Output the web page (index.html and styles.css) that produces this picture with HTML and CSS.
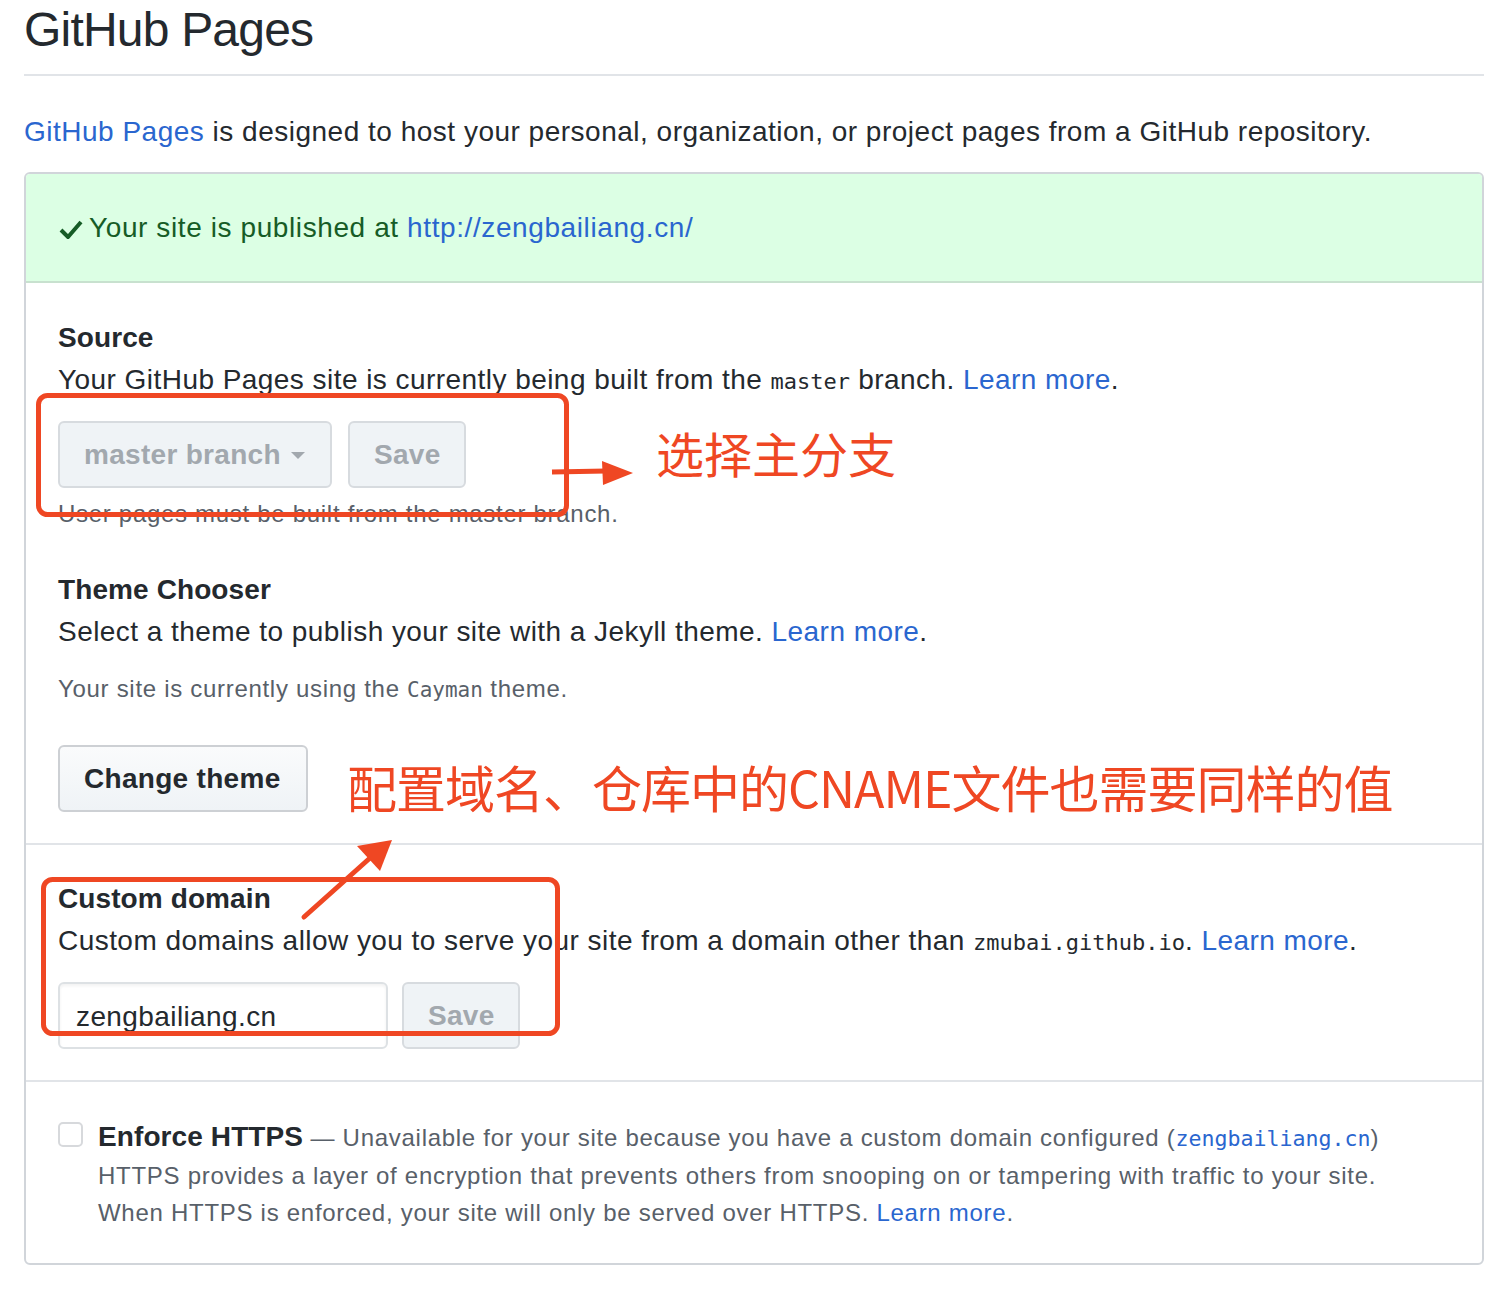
FILE: index.html
```html
<!DOCTYPE html>
<html lang="en">
<head>
<meta charset="utf-8">
<title>GitHub Pages</title>
<link rel="stylesheet" href="styles.css">
</head>
<body>
<div class="page">
  <div class="subhead">
    <h2 class="subhead-title">GitHub Pages</h2>
  </div>
  <p class="intro"><a class="link" href="#">GitHub Pages</a> is designed to host your personal, organization, or project pages from a GitHub repository.</p>

  <div class="box">
    <div class="flash">
      <svg class="check" width="24" height="20" viewBox="0 0 24 20"><path d="M2 11 L9 18 L22 3" fill="none" stroke="#165c26" stroke-width="4"/></svg>
      <span>Your site is published at <a class="link" href="#">http://zengbailiang.cn/</a></span>
    </div>

    <div class="section source">
      <h3 class="sec-title">Source</h3>
      <p class="sec-desc">Your GitHub Pages site is currently being built from the <code class="mono">master</code> branch. <a class="link" href="#">Learn more</a>.</p>
      <div class="form-row">
        <button class="btn btn-disabled btn-select">master branch <span class="caret"></span></button>
        <button class="btn btn-disabled btn-save">Save</button>
      </div>
      <p class="note">User pages must be built from the master branch.</p>

      <h3 class="sec-title theme-title">Theme Chooser</h3>
      <p class="sec-desc">Select a theme to publish your site with a Jekyll theme. <a class="link" href="#">Learn more</a>.</p>
      <p class="note theme-note">Your site is currently using the <span class="mono-note">Cayman</span> theme.</p>
      <button class="btn btn-theme">Change theme</button>
    </div>

    <div class="section domain">
      <h3 class="sec-title">Custom domain</h3>
      <p class="sec-desc">Custom domains allow you to serve your site from a domain other than <code class="mono">zmubai.github.io</code>. <a class="link" href="#">Learn more</a>.</p>
      <div class="form-row">
        <div class="input">zengbailiang.cn</div>
        <button class="btn btn-disabled btn-save2">Save</button>
      </div>
    </div>

    <div class="section https">
      <div class="check-row">
        <span class="checkbox"></span>
        <div class="https-text">
          <p class="https-line"><strong class="https-label">Enforce HTTPS</strong> — Unavailable for your site because you have a custom domain configured (<span class="mono-link">zengbailiang.cn</span>)</p>
          <p class="https-line">HTTPS provides a layer of encryption that prevents others from snooping on or tampering with traffic to your site.</p>
          <p class="https-line">When HTTPS is enforced, your site will only be served over HTTPS. <a class="link" href="#">Learn more</a>.</p>
        </div>
      </div>
    </div>
  </div>
</div>

<div class="anno anno-1">选择主分支</div>
<div class="anno anno-2">配置域名、仓库中的CNAME文件也需要同样的值</div>
<svg class="anno-svg" width="1510" height="1296" viewBox="0 0 1510 1296">
  <rect x="38.5" y="395.5" width="528" height="119" rx="9" fill="none" stroke="#ef4723" stroke-width="5"/>
  <rect x="43.5" y="879.5" width="514" height="154" rx="9" fill="none" stroke="#ef4723" stroke-width="5"/>
  <path d="M552 472 L606 471" stroke="#ef4723" stroke-width="5" fill="none"/>
  <path d="M602 461 L633 473 L603 485 Z" fill="#ef4723"/>
  <path d="M304 917 L370 858" stroke="#ef4723" stroke-width="5" stroke-linecap="round" fill="none"/>
  <path d="M357 846 L392 840 L380 871 Z" fill="#ef4723"/>
</svg>
</body>
</html>
```

FILE: styles.css
```css
* { box-sizing: border-box; }
html, body { margin: 0; padding: 0; background: #fff; }
body {
  width: 1510px;
  height: 1296px;
  overflow: hidden;
  position: relative;
  font-family: "Liberation Sans", Arial, sans-serif;
  color: #24292e;
}
.page { padding: 0 26px 0 24px; }

.subhead {
  border-bottom: 2px solid #e1e4e8;
  padding-bottom: 14px;
}
.subhead-title {
  margin: 0;
  font-size: 48px;
  font-weight: normal;
  line-height: 60px;
  letter-spacing: -0.8px;
}
.intro {
  margin: 35px 0 19px;
  font-size: 28px;
  line-height: 42px;
  letter-spacing: 0.5px;
}
.link { color: #2a66cf; text-decoration: none; }

.box {
  border: 2px solid #d1d5da;
  border-radius: 6px;
  overflow: hidden;
}
.flash {
  background: #dcffe4;
  border-bottom: 2px solid #c8e1cf;
  height: 109px;
  display: flex;
  align-items: center;
  padding-left: 33px;
  font-size: 28px;
  color: #165c26;
  gap: 6px;
  letter-spacing: 0.6px;
}
.check { flex: none; margin-top: 2px; }

.section { padding: 0 32px; }
.section + .section { border-top: 2px solid #e1e4e8; }

.source { padding-top: 34px; padding-bottom: 31px; }
.sec-title {
  margin: 0;
  font-size: 28px;
  font-weight: bold;
  line-height: 42px;
  letter-spacing: 0.1px;
}
.sec-desc {
  margin: 0;
  font-size: 28px;
  line-height: 42px;
  letter-spacing: 0.45px;
}
.mono {
  font-family: "DejaVu Sans Mono", "Liberation Mono", monospace;
  font-size: 22px;
  letter-spacing: 0;
}
.form-row {
  display: flex;
  gap: 16px;
  margin-top: 18px;
}
.btn {
  font-family: "Liberation Sans", Arial, sans-serif;
  font-size: 28px;
  font-weight: bold;
  height: 67px;
  border-radius: 6px;
  padding: 0 24px;
  display: flex;
  align-items: center;
  gap: 10px;
  letter-spacing: 0.3px;
}
.btn-disabled {
  background: #eff3f6;
  border: 2px solid #d7dbdf;
  color: #a2a8ae;
}
.btn-select { width: 274px; }
.btn-save { width: 118px; }
.caret {
  width: 0; height: 0;
  border-left: 7px solid transparent;
  border-right: 7px solid transparent;
  border-top: 7px solid #a2a8ae;
  margin-top: 2px;
}
.note {
  margin: 8px 0 0;
  font-size: 24px;
  line-height: 36px;
  color: #586069;
  letter-spacing: 0.7px;
}
.theme-title { margin-top: 37px; }
.theme-note { margin-top: 18px; }
.mono-note {
  font-family: "DejaVu Sans Mono", "Liberation Mono", monospace;
  font-size: 21px;
  letter-spacing: 0;
}
.btn-theme {
  margin-top: 37px;
  width: 250px;
  background: linear-gradient(#fafbfc, #eff3f6);
  border: 2px solid #cdd0d4;
  color: #24292e;
}

.domain { padding-top: 33px; padding-bottom: 31px; }
.input {
  width: 330px;
  height: 67px;
  border: 2px solid #dde1e4;
  border-radius: 6px;
  box-shadow: inset 0 2px 3px rgba(27,31,35,0.06);
  font-size: 28px;
  padding-left: 16px;
  display: flex;
  align-items: center;
  padding-top: 2px;
  letter-spacing: 0.4px;
}
.btn-save2 { width: 118px; margin-left: -2px; }

.https { padding-top: 38px; padding-bottom: 32px; }
.check-row { display: flex; gap: 15px; }
.checkbox {
  flex: none;
  width: 25px;
  height: 25px;
  border: 2px solid #d7d9dc;
  border-radius: 5px;
  margin-top: 2px;
}
.https-text { font-size: 24px; color: #586069; letter-spacing: 0.72px; }
.https-line { margin: 0; line-height: 37px; }
.https-line:first-child { line-height: 36px; height: 37px; }
.https-label { font-size: 28px; color: #24292e; letter-spacing: 0.1px; line-height: 30px; }
.mono-link {
  font-family: "DejaVu Sans Mono", "Liberation Mono", monospace;
  font-size: 21.6px;
  color: #2a66cf;
  letter-spacing: 0;
}

.anno {
  position: absolute;
  color: #ef4723;
  font-family: "Noto Sans CJK SC", "Liberation Sans", sans-serif;
  white-space: nowrap;
}
.anno-1 { left: 656px; top: 417px; font-size: 48px; line-height: 70px; }
.anno-2 { left: 347px; top: 750px; font-size: 50px; line-height: 72px; letter-spacing: -1px; }
.anno-svg { position: absolute; left: 0; top: 0; pointer-events: none; }
```
